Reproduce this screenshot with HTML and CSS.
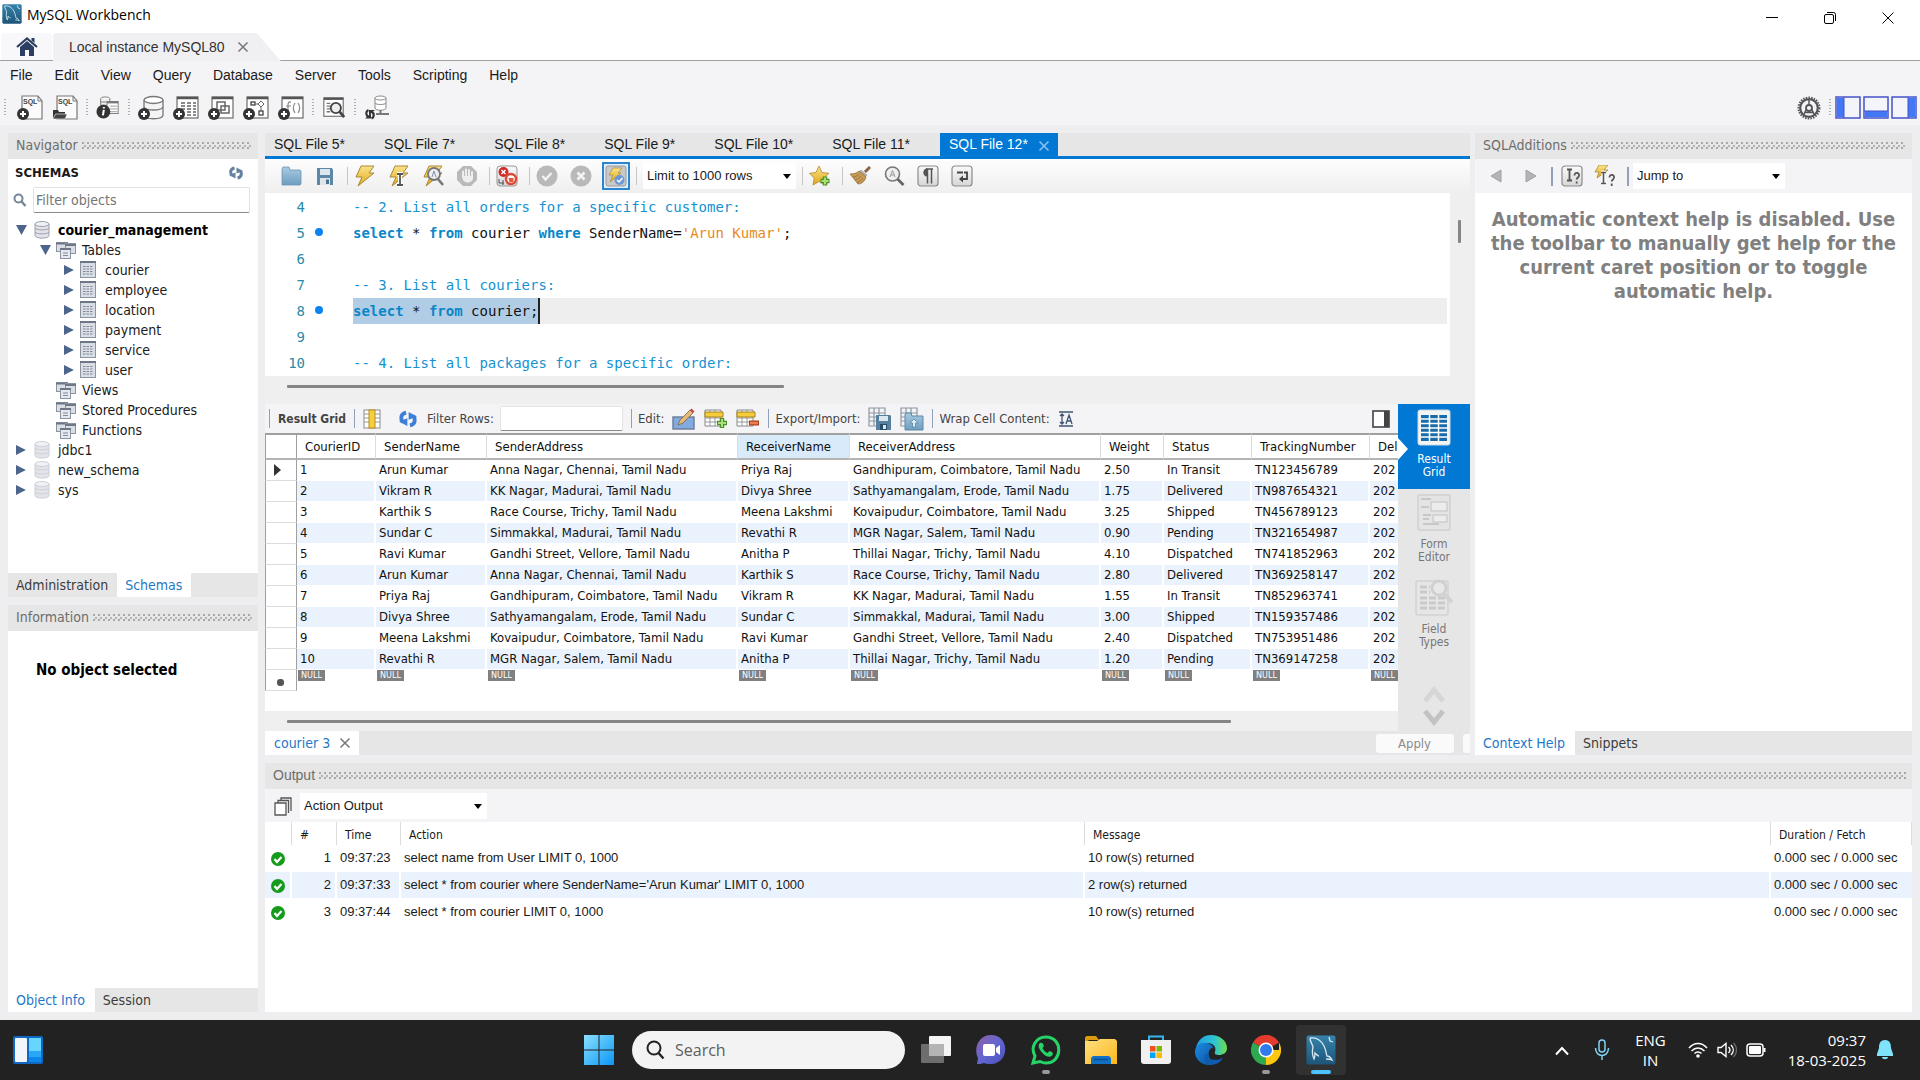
FILE: index.html
```html
<!DOCTYPE html>
<html lang="en">
<head>
<meta charset="utf-8">
<title>MySQL Workbench</title>
<link rel="stylesheet" href="styles.css">
</head>
<body>
<svg class="sprite" aria-hidden="true">
  <defs>
    <linearGradient id="gold" x1="0" y1="0" x2="0" y2="1"><stop offset="0" stop-color="#fbe38a"/><stop offset="1" stop-color="#e0a818"/></linearGradient>
    <linearGradient id="steel" x1="0" y1="0" x2="0" y2="1"><stop offset="0" stop-color="#a9cbe2"/><stop offset="1" stop-color="#6e9dbf"/></linearGradient>
    <linearGradient id="key" x1="0" y1="0" x2="0" y2="1"><stop offset="0" stop-color="#fafafa"/><stop offset="1" stop-color="#d6d6d6"/></linearGradient>
    <linearGradient id="win" x1="0" y1="0" x2="1" y2="1"><stop offset="0" stop-color="#8be0fd"/><stop offset="1" stop-color="#0a97f5"/></linearGradient>
    <linearGradient id="chat" x1="0" y1="0" x2="1" y2="1"><stop offset="0" stop-color="#8f5fa8"/><stop offset="0.5" stop-color="#6367cf"/><stop offset="1" stop-color="#4a4fc0"/></linearGradient>
    <linearGradient id="folder" x1="0" y1="0" x2="1" y2="1"><stop offset="0" stop-color="#ffe083"/><stop offset="1" stop-color="#fbb719"/></linearGradient>
    <linearGradient id="edgeTop" x1="0" y1="0" x2="1" y2="0"><stop offset="0" stop-color="#1f9fe0"/><stop offset="0.6" stop-color="#2ec4d2"/><stop offset="1" stop-color="#6fe04a"/></linearGradient>
    <linearGradient id="edgeLow" x1="0" y1="0" x2="1" y2="1"><stop offset="0" stop-color="#1b8ee6"/><stop offset="1" stop-color="#0c4c96"/></linearGradient>
    <linearGradient id="sea" x1="0" y1="0" x2="0" y2="1"><stop offset="0" stop-color="#3583ab"/><stop offset="1" stop-color="#1d5578"/></linearGradient>
  </defs>
  <symbol id="plus" viewBox="0 0 12 12"><circle cx="6" cy="6" r="6" fill="#333"/><path d="M6 3v6M3 6h6" stroke="#fff" stroke-width="2"/></symbol>
  <symbol id="i-home" viewBox="0 0 22 19"><path d="M4 10v9h5v-6h4v6h5v-9l-7-6z" fill="#2c3e62"/><path d="M1 10l10-8.500L21 10" fill="none" stroke="#2c3e62" stroke-width="2.200"/><path d="M15.500 1h3v5l-3-2.500z" fill="#2c3e62"/></symbol>
  <symbol id="i-x" viewBox="0 0 12 12"><path d="M1.500 1.500l9 9M10.500 1.500l-9 9" stroke="currentColor" stroke-width="1.500" fill="none"/></symbol>
  <symbol id="i-info" viewBox="0 0 26 26"><ellipse cx="10" cy="3" rx="5" ry="2" fill="#fff" stroke="#777"/><path d="M5 3v7h10V3" fill="#eee" stroke="#777"/><path d="M5 6.500h10" stroke="#777"/><rect x="12" y="6" width="12" height="13" fill="#fff" stroke="#777"/><path d="M12 7h12" stroke="#777" stroke-width="2"/><path d="M15 11h8M15 14h8M15 17h8" stroke="#999"/><circle cx="8" cy="17" r="7.500" fill="#333"/><path d="M8.500 12v1.500M8.500 15l-1 6" stroke="#fff" stroke-width="2.200"/></symbol>
  <symbol id="i-dbnew" viewBox="0 0 26 26"><path d="M6 5v15c0 5 19 5 19 0V5" fill="#f4f4f4" stroke="#777" stroke-width="1.300"/><ellipse cx="15.500" cy="5" rx="9.500" ry="3.500" fill="#fff" stroke="#777" stroke-width="1.300"/><path d="M6 12c2 4 17 4 19 0" fill="none" stroke="#777" stroke-width="1.300"/><use href="#plus" x="0" y="13" width="12" height="12"/></symbol>
  <symbol id="i-tblnew" viewBox="0 0 26 26"><rect x="4" y="2" width="21" height="21" fill="#fff" stroke="#777" stroke-width="1.300"/><path d="M4 3h21" stroke="#555" stroke-width="2.500"/><path d="M8 8h4M14 8h4M20 8h3M8 11h4M14 11h4M20 11h3M8 14h4M14 14h4M20 14h3M14 17h4M20 17h3M14 20h4M20 20h3" stroke="#666" stroke-width="1.500"/><use href="#plus" x="0" y="13" width="12" height="12"/></symbol>
  <symbol id="i-viewnew" viewBox="0 0 26 26"><rect x="4" y="2" width="21" height="21" fill="#fff" stroke="#777" stroke-width="1.300"/><path d="M4 3h21" stroke="#555" stroke-width="2.500"/><rect x="9" y="7" width="8" height="8" fill="none" stroke="#666" stroke-width="1.500"/><rect x="13" y="11" width="8" height="7" fill="none" stroke="#666" stroke-width="1.500"/><use href="#plus" x="0" y="13" width="12" height="12"/></symbol>
  <symbol id="i-procnew" viewBox="0 0 26 26"><rect x="4" y="2" width="21" height="21" fill="#fff" stroke="#777" stroke-width="1.300"/><path d="M4 3h21" stroke="#555" stroke-width="2.500"/><rect x="8" y="7" width="4" height="3" fill="none" stroke="#444" stroke-width="1.300"/><path d="M18 6l3 3-3 3-3-3zM12 9h3M18 12v4" fill="none" stroke="#666"/><rect x="16" y="16" width="4" height="4" fill="none" stroke="#444" stroke-width="1.300"/><use href="#plus" x="0" y="13" width="12" height="12"/></symbol>
  <symbol id="i-funcnew" viewBox="0 0 26 26"><rect x="4" y="2" width="21" height="21" fill="#fff" stroke="#777" stroke-width="1.300"/><path d="M4 3h21" stroke="#555" stroke-width="2.500"/><path d="M13 7c-3-.5-3 2-3 4v6M8 11h5M17 8c-2 3-2 7 0 10M20 8c2 3 2 7 0 10" fill="none" stroke="#888" stroke-width="1.200"/><use href="#plus" x="0" y="13" width="12" height="12"/></symbol>
  <symbol id="i-search-tbl" viewBox="0 0 26 26"><rect x="2" y="2" width="21" height="20" fill="#fff" stroke="#777" stroke-width="1.300"/><path d="M2 3h21" stroke="#555" stroke-width="2.500"/><path d="M5 8h4M5 11h4M5 14h4M5 17h4" stroke="#777" stroke-width="1.500"/><circle cx="15" cy="13" r="5.500" fill="#eee" stroke="#444" stroke-width="2"/><path d="M19 17l5 6" stroke="#444" stroke-width="3"/></symbol>
  <symbol id="i-reconnect" viewBox="0 0 26 26"><path d="M11 3v10c0 3 11 3 11 0V3" fill="#fff" stroke="#888"/><ellipse cx="16.500" cy="3" rx="5.500" ry="2" fill="#fff" stroke="#888"/><path d="M11 8c1 2 10 2 11 0" fill="none" stroke="#888"/><path d="M16.500 15v4M12 19h13" stroke="#777" stroke-width="2"/><path d="M4.500 15c-3 1.500-3 5 0 7M7.500 23.500c3-1.500 3-5 0-7" fill="none" stroke="#333" stroke-width="2.200"/><path d="M1 23.500h6v-5zM11 15H5v5z" fill="#333"/></symbol>
  <symbol id="i-gear" viewBox="0 0 24 24"><circle cx="12" cy="12" r="10.500" fill="none" stroke="#555" stroke-width="2" stroke-dasharray="1.500 1.200"/><circle cx="12" cy="12" r="8.800" fill="none" stroke="#555" stroke-width="2.200"/><circle cx="12" cy="12" r="3" fill="none" stroke="#555" stroke-width="1.800"/><path d="M12 4v5M9.500 13L7 18M14.500 13l2.500 5M7 16.500h10" stroke="#555" stroke-width="1.500" fill="none"/></symbol>
  <symbol id="i-pleft" viewBox="0 0 26 24"><rect x="1" y="1" width="24" height="21" fill="#f4f4fb" stroke="#4653c9" stroke-width="1.500"/><path d="M2 2h7v19H2z" fill="#4277f5"/><path d="M9 1v21" stroke="#4653c9"/></symbol>
  <symbol id="i-pbottom" viewBox="0 0 26 24"><rect x="1" y="1" width="24" height="21" fill="#f4f4fb" stroke="#4653c9" stroke-width="1.500"/><path d="M2 15h22v6H2z" fill="#4277f5"/><path d="M1 15h24" stroke="#4653c9"/></symbol>
  <symbol id="i-pright" viewBox="0 0 26 24"><rect x="1" y="1" width="24" height="21" fill="#f4f4fb" stroke="#4653c9" stroke-width="1.500"/><path d="M17 2h7v19h-7z" fill="#4277f5"/><path d="M17 1v21" stroke="#4653c9"/></symbol>
  <symbol id="i-sync" viewBox="0 0 14 14"><path d="M5.500 2C1 3 1 7 3 9.500M8.500 12C13 11 13 7 11 4.500" fill="none" stroke="currentColor" stroke-width="3"/><path d="M0 9l6.500 3.500V6.500zM14 5L7.500 1.500v6z" fill="currentColor"/></symbol>
  <symbol id="i-mag" viewBox="0 0 14 14"><circle cx="5.500" cy="5.500" r="4" fill="none" stroke="#76869a" stroke-width="2"/><path d="M8.500 8.500L12.500 13" stroke="#76869a" stroke-width="2.500"/></symbol>
  <symbol id="i-db" viewBox="0 0 16 18"><path d="M1 3v11.500c0 3.500 14 3.500 14 0V3" fill="#e2e4ea" stroke="currentColor"/><ellipse cx="8" cy="3" rx="7" ry="2.500" fill="#f0f1f4" stroke="currentColor"/><path d="M1 7c1 2.500 13 2.500 14 0M1 11c1 2.500 13 2.500 14 0" fill="none" stroke="currentColor"/></symbol>
  <symbol id="i-tbl" viewBox="0 0 16 18"><rect x=".5" y=".5" width="15" height="16" fill="#d9dde4" stroke="#8b94a1"/><path d="M0 1h16" stroke="#6d7785" stroke-width="2"/><path d="M3 5.500h10M3 8h10M3 10.500h10M3 13h10" stroke="#828c9a" stroke-dasharray="2.500 1"/></symbol>
  <symbol id="i-multi" viewBox="0 0 20 17"><rect x=".5" y=".5" width="11" height="9" fill="#d9dde4" stroke="#8b94a1"/><path d="M0 1.500h12" stroke="#6d7785" stroke-width="2"/><rect x="9.500" y="1.500" width="10" height="10" fill="#d9dde4" stroke="#8b94a1"/><path d="M9 3h11" stroke="#6d7785" stroke-width="2"/><rect x="4.500" y="6.500" width="10" height="10" fill="#e6e8ee" stroke="#8b94a1"/><path d="M4 7h11" stroke="#6d7785" stroke-width="2"/><path d="M7 11h5M7 13.500h5" stroke="#828c9a"/></symbol>
  <symbol id="i-folder" viewBox="0 0 22 22"><path d="M2 4l1-2h6l1 3H20l1 1v13l-1 1H2z" fill="url(#steel)" stroke="#6c97b5" stroke-width=".8"/></symbol>
  <symbol id="i-save" viewBox="0 0 22 22"><path d="M3 3h15l1 2v15H3z" fill="#5c88a8"/><path d="M6 4h10v6H6z" fill="#dde7ee"/><path d="M6 13h10v7H6z" fill="#dfe5ea"/><path d="M12 14.500h3V19h-3z" fill="#4b7391"/></symbol>
  <symbol id="i-bolt" viewBox="0 0 22 22"><path d="M7 1h13l-5 7h5L4 21l4-9H2z" fill="url(#gold)" stroke="#a98a3a" stroke-width="1"/></symbol>
  <symbol id="i-boltcur" viewBox="0 0 22 22"><use href="#i-bolt"/><path d="M9 9h6M12 9v11M9 20h6" stroke="#fff" stroke-width="4"/><path d="M9 9h6M12 9v11M9 20h6" stroke="#555" stroke-width="1.800"/></symbol>
  <symbol id="i-explain" viewBox="0 0 22 22"><use href="#i-bolt"/><circle cx="12" cy="9" r="6" fill="#eef2f8" fill-opacity=".9" stroke="#777" stroke-width="1.800"/><path d="M10 12l2-6 2 6" fill="none" stroke="#7e93bd"/><path d="M16 14l5 6" stroke="#777" stroke-width="2.600"/></symbol>
  <symbol id="i-stop" viewBox="0 0 22 22"><path d="M7 1h8l6 6v8l-6 6H7l-6-6V7z" fill="#b9b9b9"/><path d="M7 12V6.500M10 11V4.500M13 11V5M16 12V7" stroke="#eee" stroke-width="2" stroke-linecap="round"/><path d="M6 11h11v2c0 5-8 6-10 2z" fill="#eee"/></symbol>
  <symbol id="i-err" viewBox="0 0 22 22"><rect x="1" y="1" width="20" height="20" rx="3" fill="url(#key)" stroke="#999"/><circle cx="7.500" cy="7" r="5" fill="#cf2a27"/><path d="M5.500 5l4 4M9.500 5l-4 4" stroke="#fff" stroke-width="1.500"/><circle cx="15" cy="14" r="5" fill="#fff" stroke="#dd4b35" stroke-width="2.500"/><path d="M12.500 13h5v4h-4z" fill="#e2573f"/><path d="M3 14v4h5M7 15v5" stroke="#555" fill="none"/></symbol>
  <symbol id="i-ok" viewBox="0 0 22 22"><circle cx="11" cy="11" r="10.500" fill="#b9b9b9"/><path d="M6.500 11l3 3.500 6-6.500" stroke="#f3f3f3" stroke-width="2.400" fill="none"/></symbol>
  <symbol id="i-no" viewBox="0 0 22 22"><circle cx="11" cy="11" r="10.500" fill="#b9b9b9"/><path d="M7.500 7.500l7 7M14.500 7.500l-7 7" stroke="#f3f3f3" stroke-width="2.600"/></symbol>
  <symbol id="i-auto" viewBox="0 0 22 22"><rect x="1" y="1" width="20" height="20" rx="2" fill="#c9c9c9" stroke="#999"/><path d="M8 3h9l-4 5h3L5 17l3-7H4z" fill="url(#gold)" stroke="#a98a3a" stroke-width=".7"/><circle cx="14.500" cy="15" r="5" fill="#6d98d8"/><path d="M12 15l2 2 3.500-4" stroke="#fff" stroke-width="1.500" fill="none"/></symbol>
  <symbol id="i-star" viewBox="0 0 22 22"><path d="M10 1l3 6.500 7 .8-5 4.700 1.500 7-6.500-3.500L4 20l1.200-7L.5 8.300l6.500-.8z" fill="url(#gold)" stroke="#b08a2c" stroke-width=".8"/><path d="M16 11.500v9M11.500 16h9" stroke="#4e8f2a" stroke-width="4.500"/><path d="M16 12.500v7M12.500 16h7" stroke="#a9e07a" stroke-width="2.200"/></symbol>
  <symbol id="i-broom" viewBox="0 0 22 22"><path d="M21 2l-5 5" stroke="#8a6242" stroke-width="3"/><path d="M12 5l6 5-2 2-6-5z" fill="#b9b3a8" stroke="#888" stroke-width=".5"/><path d="M10 6l7 6c-1 4-4 7-8 7L1 9c4 0 7-1 9-3z" fill="#c79a55" stroke="#8a6a3a" stroke-width=".7"/><path d="M10 9c-2 2-4 3-6 3M12 11c-2 2-3 3-6 4M14 13c-1 2-3 3-6 5" stroke="#94703a" fill="none" stroke-width=".8"/></symbol>
  <symbol id="i-find" viewBox="0 0 22 22"><circle cx="9.500" cy="9" r="7" fill="#efefef" stroke="#777" stroke-width="1.600"/><path d="M7 12l2.500-6.500L12 12M8 10h3" fill="none" stroke="#999"/><path d="M14.500 14l6 6" stroke="#666" stroke-width="2.800"/></symbol>
  <symbol id="i-pilcrow" viewBox="0 0 22 22"><rect x="1" y="1" width="20" height="20" rx="3" fill="url(#key)" stroke="#8b8b8b" stroke-width="1.200"/><path d="M10.500 3.500v8C5 12 5 3.500 10 3.500z" fill="#555"/><path d="M10.500 4v14.500M14.500 4v14.500M9 4h7" stroke="#555" stroke-width="1.500"/></symbol>
  <symbol id="i-wrap" viewBox="0 0 22 22"><rect x="1" y="1" width="20" height="20" rx="3" fill="url(#key)" stroke="#8b8b8b" stroke-width="1.200"/><path d="M6 7.500h6M13 7.500h3v6.500h-5" stroke="#444" stroke-width="1.800" fill="none"/><path d="M12 10.500v7L8 14z" fill="#444"/></symbol>
  <symbol id="i-back" viewBox="0 0 12 14"><path d="M11 1v12L1 7z" fill="#b4b4b6" stroke="#a2a2a4"/></symbol>
  <symbol id="i-fwd" viewBox="0 0 12 14"><path d="M1 1v12l10-6z" fill="#b4b4b6" stroke="#a2a2a4"/></symbol>
  <symbol id="i-help" viewBox="0 0 22 22"><rect x="1" y="1" width="20" height="20" rx="3" fill="url(#key)" stroke="#8b8b8b" stroke-width="1.200"/><path d="M6 4.500h5M8.500 4.500v11M6 15.500h5" stroke="#555" stroke-width="1.800"/><path d="M13.500 10.500c0-4 5-3 4.500 0 0 2-2.300 2-2.300 4M15.700 16.500v2" fill="none" stroke="#555" stroke-width="1.800"/></symbol>
  <symbol id="i-bolthelp" viewBox="0 0 22 22"><path d="M5 0h9l-4 5h4L3 13l2-6H1z" fill="url(#gold)" stroke="#a98a3a" stroke-width=".8"/><path d="M7 7.500h5M9.500 7.500v11M7 18.500h5" stroke="#fff" stroke-width="3.500"/><path d="M7 7.500h5M9.500 7.500v11M7 18.500h5" stroke="#555" stroke-width="1.600"/><path d="M15.500 12.500c0-4 5-3 4.500 0 0 2-2.300 2-2.300 4M17.700 18.500v2.500" fill="none" stroke="#555" stroke-width="1.800"/></symbol>
  <symbol id="i-cols" viewBox="0 0 18 20"><rect x="1" y="1" width="16" height="18" fill="#fff" stroke="#8a8a8a"/><path d="M1 5h16M1 9h16M1 13h16" stroke="#999"/><rect x="6" y="1" width="6" height="18" fill="#f7cf3e" stroke="#b88d1a"/></symbol>
  <symbol id="i-edit" viewBox="0 0 24 22"><rect x="1" y="9" width="21" height="12" fill="#82a9e0" stroke="#6a7a94" stroke-width="1.400"/><path d="M6 17l2-5L18 2l3 3-10 10z" fill="#e6b877" stroke="#7a6342" stroke-width=".8"/><path d="M18 2l1.500-1.500 3 3L21 5z" fill="#c34b3f"/></symbol>
  <symbol id="i-rowadd" viewBox="0 0 24 22"><path d="M1 2h16v16H1z" fill="#fff" stroke="#888"/><path d="M1 10h16M1 14h16M6 2v16M11 2v16" stroke="#999"/><path d="M1 4h18v5H1z" fill="#f5cc3b" stroke="#a88420"/><path d="M18 10v10M13 15h10" stroke="#4e8f2a" stroke-width="4.500"/><path d="M18 11v8M14 15h8" stroke="#a9e07a" stroke-width="2"/></symbol>
  <symbol id="i-rowdel" viewBox="0 0 24 22"><path d="M1 2h16v16H1z" fill="#fff" stroke="#888"/><path d="M1 10h16M1 14h16M6 2v16M11 2v16" stroke="#999"/><path d="M1 4h18v5H1z" fill="#f5cc3b" stroke="#a88420"/><path d="M13 15h10" stroke="#a8401c" stroke-width="5"/><path d="M14 15h8" stroke="#ee7d50" stroke-width="2.600"/></symbol>
  <symbol id="i-export" viewBox="0 0 24 24"><path d="M1 1h16v18H1zM1 6h16M1 10h16M1 14h16M6 1v18M11 1v18" fill="none" stroke="#8c97a1" stroke-width="1.200"/><path d="M8 8h14l1 1v14H8z" fill="#55819f"/><path d="M11 9h9v5h-9z" fill="#dbe6ee"/><path d="M12 17h7v6h-7z" fill="#274d68"/><path d="M15 18h3v4h-3z" fill="#dbe6ee"/></symbol>
  <symbol id="i-import" viewBox="0 0 24 24"><path d="M1 1h16v18H1zM1 6h16M1 10h16M1 14h16M6 1v18M11 1v18" fill="none" stroke="#8c97a1" stroke-width="1.200"/><path d="M5 8l1-2h5l1 3h11v14H5z" fill="url(#steel)" stroke="#5c88a8"/><path d="M14 12l4 4h-2.500v4h-3v-4H10z" fill="#dceaf4" stroke="#5c88a8" stroke-width=".8"/></symbol>
  <symbol id="i-wrapcell" viewBox="0 0 16 16"><path d="M1 1h14M1 15h14" stroke="#3f5472" stroke-width="1.500"/><path d="M4 3v10M2 5l2-2 2 2M2 11l2 2 2-2M8 13l3-9 3 9M9 10h4" fill="none" stroke="#3f5472" stroke-width="1.300"/></symbol>
  <symbol id="i-side" viewBox="0 0 18 18"><rect x="1" y="1" width="16" height="16" fill="#fff" stroke="#444" stroke-width="1.600"/><path d="M12 1h5v16h-5z" fill="#444"/></symbol>
  <symbol id="i-resgrid" viewBox="0 0 34 38"><rect x="1" y="1" width="32" height="35" rx="2" fill="#f5f5f5" stroke="#c9d7e2"/><path d="M4 6h26v26H4z" fill="#1a6ba9"/><path d="M4 10h26M4 14.500h26M4 19h26M4 23.500h26M4 28h26M12.500 6v26M21.500 6v26" stroke="#fff" stroke-width="1.500"/></symbol>
  <symbol id="i-form" viewBox="0 0 34 38"><rect x="1" y="1" width="32" height="35" rx="2" fill="#e4e4e4" stroke="#cfcfcf" stroke-width="1.500"/><path d="M4 5h10M4 13h8M6 21h8M6 25h6M6 30h16" stroke="#bdbdbd" stroke-width="1.500"/><rect x="14" y="8" width="16" height="9" fill="#ececec" stroke="#c2c2c2"/><rect x="16" y="21" width="14" height="7" fill="#ececec" stroke="#c2c2c2"/></symbol>
  <symbol id="i-types" viewBox="0 0 38 38"><rect x="1" y="2" width="32" height="34" rx="2" fill="#e6e6e6" stroke="#d2d2d2" stroke-width="1.500"/><path d="M5 8h10M5 13h10M5 19h26M5 24h26M5 29h26" stroke="#cacaca" stroke-width="3" stroke-dasharray="7 2"/><circle cx="24" cy="9" r="7" fill="#e8e8e8" stroke="#d0d0d0" stroke-width="3"/><path d="M29 15l8 8" stroke="#d2d2d2" stroke-width="4"/></symbol>
  <symbol id="i-up" viewBox="0 0 24 18"><path d="M3 15l9-11 9 11" fill="none" stroke="currentColor" stroke-width="5"/></symbol>
  <symbol id="i-down" viewBox="0 0 24 18"><path d="M3 3l9 11 9-11" fill="none" stroke="currentColor" stroke-width="5"/></symbol>
  <symbol id="i-stack" viewBox="0 0 18 19"><path d="M1 6h11v12H1z" fill="#fff" stroke="#555" stroke-width="1.300"/><path d="M4 6V3.500h10.500V16M7 3.500V1h10v13" fill="none" stroke="#555" stroke-width="1.300"/></symbol>
  <symbol id="i-done" viewBox="0 0 14 14"><circle cx="7" cy="7" r="7" fill="#159b1c"/><path d="M3.500 7l2.500 3 4.500-5" fill="none" stroke="#fff" stroke-width="2.200"/></symbol>
  <symbol id="i-dolphin" viewBox="0 0 30 30"><rect x=".5" y=".5" width="29" height="29" rx="2" fill="url(#sea)"/><path d="M4 3c6-1 11 2 14 8 2 4 2 7 3 10 2 0 4 2 5 4-2-1-4-1-6-1M4 3c0 4 2 5 3 9-1 4-1 8 1 12 1-2 1-4 1-6 2 2 3 3 4 3M23 2l1 4 3 1" fill="none" stroke="#d8e8f2" stroke-width="1.300"/></symbol>
  <symbol id="i-widgets" viewBox="0 0 30 28"><rect width="30" height="28" rx="2" fill="#1068c2"/><rect x="2" y="2" width="12" height="24" rx="1" fill="#f2f6fb"/><rect x="16" y="2" width="12" height="13" fill="#66d6ff"/><rect x="16" y="15" width="12" height="6" fill="#2aa8f8"/><rect x="16" y="21" width="12" height="5" fill="#0e86ea"/></symbol>
  <symbol id="i-start" viewBox="0 0 30 30"><path d="M0 0h14.500v14.500H0zM15.500 0H30v14.500H15.500zM0 15.500h14.500V30H0zM15.500 15.500H30V30H15.500z" fill="url(#win)"/></symbol>
  <symbol id="i-lens" viewBox="0 0 20 20"><circle cx="9" cy="8" r="6.500" fill="none" stroke="#222" stroke-width="2"/><path d="M13.500 13l5 5.500" stroke="#222" stroke-width="2.400"/></symbol>
  <symbol id="i-taskview" viewBox="0 0 32 30"><rect x="9" y="1" width="22" height="20" rx="1" fill="#f4f4f4"/><rect x="1" y="9" width="23" height="19" rx="1" fill="#6e6e6e"/><rect x="9" y="9" width="15" height="12" fill="#b4b4b4"/></symbol>
  <symbol id="i-chat" viewBox="0 0 30 30"><path d="M15 0c19 0 19 28 0 29-3 0-5 0-7-1-2 1-5 1-7 1l1-6C-3 13 3 0 15 0z" fill="url(#chat)"/><rect x="7" y="9" width="12" height="12" rx="2" fill="#fff"/><path d="M20 13l4-3v10l-4-3z" fill="#fff"/></symbol>
  <symbol id="i-whatsapp" viewBox="0 0 30 30"><path d="M2 28l2-7C-1 12 5 2 15 2c17 0 17 26 0 26-2 0-4-.5-6-1.500z" fill="none" stroke="#25d366" stroke-width="3"/><path d="M9 8c2-1 3 0 4 3l-1.500 2c1 2.500 3 4 5 5l2-2c3 1 4 2 3 4-2 3-7 2-10-2-4-4-5-8-2.500-10z" fill="#25d366"/></symbol>
  <symbol id="i-explorer" viewBox="0 0 32 28"><path d="M0 2c0-1 1-2 2-2h9l3 4H4L0 8z" fill="#dd9a0c"/><path d="M0 8V5h12l3-2h15l2 2v23H0z" fill="url(#folder)"/><path d="M6 28v-6l2-2h16l2 2v6z" fill="#0f72c6"/><path d="M9 23.500h14" stroke="#0a4c8a" stroke-width="1.500"/></symbol>
  <symbol id="i-store" viewBox="0 0 30 30"><path d="M8 6V1.500h14V6" fill="none" stroke="#35b5ec" stroke-width="2"/><path d="M0 5h30v21c0 2-1 3-3 3H3c-2 0-3-1-3-3z" fill="#f0f0f0"/><path d="M9 11h5.500v5.500H9z" fill="#f25022"/><path d="M15.500 11H21v5.500h-5.500z" fill="#7fba00"/><path d="M9 17.500h5.500V23H9z" fill="#00a4ef"/><path d="M15.500 17.500H21V23h-5.500z" fill="#ffb900"/></symbol>
  <symbol id="i-edge" viewBox="0 0 32 30"><path d="M1 13C3 4 9 0 16 0c9 0 16 6 16 13 0 5-4 7-8 7-3 0-5-1-4-3 2-6-3-9-8-9C6 8 2 11 1 13z" fill="url(#edgeTop)"/><path d="M0 17c0-7 6-10 12-9 4 1 6 3 6 5-6 0-6 12 2 14-2 2-4 3-6 3C5 30 0 23 0 17z" fill="url(#edgeLow)"/><path d="M12 18c0 6 6 9 16 5-3 5-8 7-13 7-7-3-6-10-3-12z" fill="#0e5bb0"/></symbol>
  <symbol id="i-chrome" viewBox="0 0 30 30"><path d="M15 15L2 7.500A15 15 0 0128 7.500z" fill="#e33b2e"/><path d="M15 15L2 7.500A15 15 0 0015 30z" fill="#2da94f"/><path d="M15 15h13V7.500A15 15 0 0115 30z" fill="#fdc70f"/><circle cx="15" cy="15" r="7.500" fill="#fff"/><circle cx="15" cy="15" r="6" fill="#2f7bee"/></symbol>
  <symbol id="i-chev" viewBox="0 0 14 10"><path d="M1 8.500L7 2l6 6.500" fill="none" stroke="#fff" stroke-width="2"/></symbol>
  <symbol id="i-mic" viewBox="0 0 16 22"><rect x="5" y="1" width="6" height="12" rx="3" fill="none" stroke="#7fd3f2" stroke-width="1.500"/><path d="M1.500 9c0 10 13 10 13 0M8 17v4" fill="none" stroke="#7fd3f2" stroke-width="1.500"/></symbol>
  <symbol id="i-wifi" viewBox="0 0 20 16"><path d="M1 6c5-6 13-6 18 0M3.500 9c4-4 9-4 13 0M6.500 11.500c2-2 5-2 7 0" fill="none" stroke="#fff" stroke-width="1.500"/><circle cx="10" cy="14" r="1.800" fill="#fff"/></symbol>
  <symbol id="i-vol" viewBox="0 0 20 16"><path d="M1 5.500h3l5-4v13l-5-4H1z" fill="none" stroke="#fff" stroke-width="1.400"/><path d="M11.500 5c2 2 2 4 0 6M14 3c3 3 3 7 0 10" fill="none" stroke="#fff" stroke-width="1.400"/><path d="M16.500 1c4 4 4 10 0 14" fill="none" stroke="#666" stroke-width="1.400"/></symbol>
  <symbol id="i-batt" viewBox="0 0 20 14"><rect x="1" y="1" width="16" height="12" rx="3" fill="none" stroke="#fff" stroke-width="1.500"/><rect x="3" y="3" width="12" height="8" rx="1" fill="#fff"/><path d="M18.500 5v4" stroke="#fff" stroke-width="2"/></symbol>
  <symbol id="i-bell" viewBox="0 0 16 20"><path d="M8 0c5 0 6 4 6 8l2 6v2H0v-2l2-6c0-4 1-8 6-8zM5 17h6c0 3-6 3-6 0z" fill="#7fe3fb"/></symbol>
</svg>

<header class="titlebar">
  <div class="title"><svg width="20" height="20"><use href="#i-dolphin"/></svg><h1>MySQL Workbench</h1></div>
  <div class="wincontrols">
    <button aria-label="Minimize"><svg width="12" height="12"><path d="M0 5.500h12" stroke="#000"/></svg></button>
    <button aria-label="Restore"><svg width="12" height="12" fill="none" stroke="#000"><rect x=".5" y="2.500" width="9" height="9" rx="1.500"/><path d="M3 .5h6.500a2 2 0 012 2V9"/></svg></button>
    <button aria-label="Close"><svg width="12" height="12"><path d="M.5.5l11 11M11.500.5l-11 11" stroke="#000"/></svg></button>
  </div>
</header>
<nav class="conntabs">
  <button class="hometab" aria-label="Home"><svg width="22" height="19"><use href="#i-home"/></svg></button>
  <div class="conntab"><button>Local instance MySQL80</button><button class="close" aria-label="Close connection"><svg width="12" height="12"><use href="#i-x"/></svg></button></div>
</nav>
<nav class="menubar">
  <button>File</button><button>Edit</button><button>View</button><button>Query</button><button>Database</button><button>Server</button><button>Tools</button><button>Scripting</button><button>Help</button>
</nav>
<div class="toolbar">
  <span class="grip"></span>
  <div class="tgroup first">
    <button aria-label="New SQL tab"><svg width="26" height="26"><path d="M5 1h16l4 5v18H5z" fill="#fbfbfb" stroke="#777" stroke-width="1.200"/><path d="M21 1v5h4" fill="none" stroke="#777"/><text x="6" y="9" class="tiny">SQL</text><use href="#plus" x="0" y="13" width="12" height="12"/></svg></button>
    <button aria-label="Open SQL script"><svg width="26" height="26"><path d="M5 1h16l4 5v18H5z" fill="#fbfbfb" stroke="#777" stroke-width="1.200"/><path d="M21 1v5h4" fill="none" stroke="#777"/><text x="6" y="9" class="tiny">SQL</text><path d="M1 24v-9h5l1 2h6v2h2l-2 5z" fill="#333"/><path d="M3.500 19H15l-2 5H1z" fill="#444" stroke="#fff" stroke-width=".6"/></svg></button>
  </div>
  <span class="grip"></span>
  <div class="tgroup"><button aria-label="Inspector"><svg width="24" height="26"><use href="#i-info"/></svg></button></div>
  <span class="grip"></span>
  <div class="tgroup">
    <button aria-label="New schema"><svg width="26" height="26"><use href="#i-dbnew"/></svg></button>
    <button aria-label="New table"><svg width="26" height="26"><use href="#i-tblnew"/></svg></button>
    <button aria-label="New view"><svg width="26" height="26"><use href="#i-viewnew"/></svg></button>
    <button aria-label="New procedure"><svg width="26" height="26"><use href="#i-procnew"/></svg></button>
    <button aria-label="New function"><svg width="26" height="26"><use href="#i-funcnew"/></svg></button>
  </div>
  <span class="grip"></span>
  <div class="tgroup"><button aria-label="Search data"><svg width="24" height="26"><use href="#i-search-tbl"/></svg></button></div>
  <span class="grip"></span>
  <div class="tgroup"><button aria-label="Reconnect"><svg width="26" height="26"><use href="#i-reconnect"/></svg></button></div>
  <div class="tright">
    <button class="prefs" aria-label="Preferences"><svg width="24" height="24"><use href="#i-gear"/></svg></button>
    <span class="grip"></span>
    <div class="toggles">
      <button aria-label="Toggle sidebar"><svg width="26" height="24"><use href="#i-pleft"/></svg></button>
      <button aria-label="Toggle output"><svg width="26" height="24"><use href="#i-pbottom"/></svg></button>
      <button aria-label="Toggle additions"><svg width="26" height="24"><use href="#i-pright"/></svg></button>
    </div>
  </div>
</div>

<main class="workspace">
  <aside class="sidebar">
    <section class="panel schemas">
      <h2 class="phead">Navigator<span class="dots"></span></h2>
      <div class="pbody">
        <div class="shead"><h3>SCHEMAS</h3><button aria-label="Refresh schemas"><svg width="14" height="14"><use href="#i-sync"/></svg></button></div>
        <div class="filter"><label for="filter" aria-label="Filter objects"><svg width="14" height="14"><use href="#i-mag"/></svg></label><input id="filter" type="text" placeholder="Filter objects"></div>
        <ul class="tree">
          <li class="l1 bold"><i class="open"></i><svg class="dk" width="16" height="18"><use href="#i-db"/></svg>courier_management</li>
          <li class="l2"><i class="open"></i><svg width="20" height="17"><use href="#i-multi"/></svg>Tables</li>
          <li class="l3"><i class="shut"></i><svg width="16" height="18"><use href="#i-tbl"/></svg>courier</li>
          <li class="l3"><i class="shut"></i><svg width="16" height="18"><use href="#i-tbl"/></svg>employee</li>
          <li class="l3"><i class="shut"></i><svg width="16" height="18"><use href="#i-tbl"/></svg>location</li>
          <li class="l3"><i class="shut"></i><svg width="16" height="18"><use href="#i-tbl"/></svg>payment</li>
          <li class="l3"><i class="shut"></i><svg width="16" height="18"><use href="#i-tbl"/></svg>service</li>
          <li class="l3"><i class="shut"></i><svg width="16" height="18"><use href="#i-tbl"/></svg>user</li>
          <li class="l2"><i></i><svg width="20" height="17"><use href="#i-multi"/></svg>Views</li>
          <li class="l2"><i></i><svg width="20" height="17"><use href="#i-multi"/></svg>Stored Procedures</li>
          <li class="l2"><i></i><svg width="20" height="17"><use href="#i-multi"/></svg>Functions</li>
          <li class="l1"><i class="shut"></i><svg class="lt" width="16" height="18"><use href="#i-db"/></svg>jdbc1</li>
          <li class="l1"><i class="shut"></i><svg class="lt" width="16" height="18"><use href="#i-db"/></svg>new_schema</li>
          <li class="l1"><i class="shut"></i><svg class="lt" width="16" height="18"><use href="#i-db"/></svg>sys</li>
        </ul>
      </div>
      <div class="btabs"><button>Administration</button><button class="on">Schemas</button></div>
    </section>
    <section class="panel info">
      <h2 class="phead">Information<span class="dots"></span></h2>
      <div class="pbody"><p class="noobj">No object selected</p></div>
      <div class="btabs"><button class="on">Object Info</button><button>Session</button></div>
    </section>
  </aside>

  <div class="content">
    <div class="upper">
      <section class="query">
        <div class="sqltabs">
          <button>SQL File 5*</button><button>SQL File 7*</button><button>SQL File 8*</button><button>SQL File 9*</button><button>SQL File 10*</button><button>SQL File 11*</button>
          <div class="on"><button>SQL File 12*</button><button class="close" aria-label="Close tab"><svg width="12" height="12"><use href="#i-x"/></svg></button></div>
        </div>
        <div class="edbar">
          <div class="egroup">
            <button aria-label="Open script"><svg width="22" height="22"><use href="#i-folder"/></svg></button>
            <button aria-label="Save script"><svg width="22" height="22"><use href="#i-save"/></svg></button>
          </div><span class="esep"></span>
          <div class="egroup">
            <button aria-label="Execute"><svg width="22" height="22"><use href="#i-bolt"/></svg></button>
            <button aria-label="Execute current"><svg width="22" height="22"><use href="#i-boltcur"/></svg></button>
            <button aria-label="Explain"><svg width="22" height="22"><use href="#i-explain"/></svg></button>
            <button aria-label="Stop"><svg width="22" height="22"><use href="#i-stop"/></svg></button>
          </div><span class="esep"></span>
          <div class="egroup"><button aria-label="Stop on error"><svg width="22" height="22"><use href="#i-err"/></svg></button></div><span class="esep"></span>
          <div class="egroup">
            <button aria-label="Commit"><svg width="22" height="22"><use href="#i-ok"/></svg></button>
            <button aria-label="Rollback"><svg width="22" height="22"><use href="#i-no"/></svg></button>
          </div>
          <button class="boxed" aria-label="Autocommit"><svg width="22" height="22"><use href="#i-auto"/></svg></button>
          <span class="esep tight"></span>
          <div class="combo limit"><select aria-label="Row limit"><option>Limit to 1000 rows</option></select></div>
          <span class="esep tight"></span>
          <div class="egroup"><button aria-label="Save snippet"><svg width="22" height="22"><use href="#i-star"/></svg></button></div><span class="esep"></span>
          <div class="egroup">
            <button aria-label="Beautify"><svg width="22" height="22"><use href="#i-broom"/></svg></button>
            <button aria-label="Find"><svg width="22" height="22"><use href="#i-find"/></svg></button>
            <button aria-label="Show invisible characters"><svg width="22" height="22"><use href="#i-pilcrow"/></svg></button>
            <button aria-label="Wrap lines"><svg width="22" height="22"><use href="#i-wrap"/></svg></button>
          </div>
        </div>
        <div class="editor">
          <div class="lines">
            <div class="line"><span class="num">4</span><span class="mark"></span><code><span class="cm">-- 2. List all orders for a specific customer:</span></code></div>
            <div class="line"><span class="num">5</span><span class="mark dot"></span><code><b>select</b> * <b>from</b> courier <b>where</b> SenderName=<span class="st">'Arun Kumar'</span>;</code></div>
            <div class="line"><span class="num">6</span><span class="mark"></span><code></code></div>
            <div class="line"><span class="num">7</span><span class="mark"></span><code><span class="cm">-- 3. List all couriers:</span></code></div>
            <div class="line"><span class="num">8</span><span class="mark dot"></span><code class="current"><span class="sel"><b>select</b> * <b>from</b> courier;</span></code></div>
            <div class="line"><span class="num">9</span><span class="mark"></span><code></code></div>
            <div class="line"><span class="num">10</span><span class="mark"></span><code><span class="cm">-- 4. List all packages for a specific order:</span></code></div>
          </div>
          <div class="vscroll"><span></span></div>
        </div>
        <div class="hscroll ed"><span></span></div>
        <div class="result">
          <div class="resmain">
            <div class="resbar">
              <span class="rsep"></span><strong>Result Grid</strong><span class="rsep"></span>
              <button aria-label="Columns"><svg width="18" height="20"><use href="#i-cols"/></svg></button>
              <button class="blue" aria-label="Refresh"><svg width="20" height="18"><use href="#i-sync"/></svg></button>
              <label for="rows">Filter Rows:</label><input id="rows" type="text">
              <span class="rsep"></span><span>Edit:</span>
              <button aria-label="Edit row"><svg width="24" height="22"><use href="#i-edit"/></svg></button>
              <button aria-label="Insert row"><svg width="24" height="22"><use href="#i-rowadd"/></svg></button>
              <button aria-label="Delete row"><svg width="24" height="22"><use href="#i-rowdel"/></svg></button>
              <span class="rsep"></span><span>Export/Import:</span>
              <button aria-label="Export"><svg width="24" height="24"><use href="#i-export"/></svg></button>
              <button aria-label="Import"><svg width="24" height="24"><use href="#i-import"/></svg></button>
              <span class="rsep"></span><span>Wrap Cell Content:</span>
              <button aria-label="Wrap cells"><svg width="16" height="16"><use href="#i-wrapcell"/></svg></button>
              <button class="side" aria-label="Toggle side bar"><svg width="18" height="18"><use href="#i-side"/></svg></button>
            </div>
            <div class="gridwrap">
              <table class="grid">
                <colgroup><col class="c0"><col class="c1"><col class="c2"><col class="c3"><col class="c4"><col class="c3"><col class="c6"><col class="c7"><col class="c8"><col></colgroup>
                <thead><tr><th></th><th>CourierID</th><th>SenderName</th><th>SenderAddress</th><th class="hot">ReceiverName</th><th>ReceiverAddress</th><th>Weight</th><th>Status</th><th>TrackingNumber</th><th>Del</th></tr></thead>
                <tbody>
                <tr><td class="cur"></td><td>1</td><td>Arun Kumar</td><td>Anna Nagar, Chennai, Tamil Nadu</td><td>Priya Raj</td><td>Gandhipuram, Coimbatore, Tamil Nadu</td><td>2.50</td><td>In Transit</td><td>TN123456789</td><td>202</td></tr>
                <tr><td></td><td>2</td><td>Vikram R</td><td>KK Nagar, Madurai, Tamil Nadu</td><td>Divya Shree</td><td>Sathyamangalam, Erode, Tamil Nadu</td><td>1.75</td><td>Delivered</td><td>TN987654321</td><td>202</td></tr>
                <tr><td></td><td>3</td><td>Karthik S</td><td>Race Course, Trichy, Tamil Nadu</td><td>Meena Lakshmi</td><td>Kovaipudur, Coimbatore, Tamil Nadu</td><td>3.25</td><td>Shipped</td><td>TN456789123</td><td>202</td></tr>
                <tr><td></td><td>4</td><td>Sundar C</td><td>Simmakkal, Madurai, Tamil Nadu</td><td>Revathi R</td><td>MGR Nagar, Salem, Tamil Nadu</td><td>0.90</td><td>Pending</td><td>TN321654987</td><td>202</td></tr>
                <tr><td></td><td>5</td><td>Ravi Kumar</td><td>Gandhi Street, Vellore, Tamil Nadu</td><td>Anitha P</td><td>Thillai Nagar, Trichy, Tamil Nadu</td><td>4.10</td><td>Dispatched</td><td>TN741852963</td><td>202</td></tr>
                <tr><td></td><td>6</td><td>Arun Kumar</td><td>Anna Nagar, Chennai, Tamil Nadu</td><td>Karthik S</td><td>Race Course, Trichy, Tamil Nadu</td><td>2.80</td><td>Delivered</td><td>TN369258147</td><td>202</td></tr>
                <tr><td></td><td>7</td><td>Priya Raj</td><td>Gandhipuram, Coimbatore, Tamil Nadu</td><td>Vikram R</td><td>KK Nagar, Madurai, Tamil Nadu</td><td>1.55</td><td>In Transit</td><td>TN852963741</td><td>202</td></tr>
                <tr><td></td><td>8</td><td>Divya Shree</td><td>Sathyamangalam, Erode, Tamil Nadu</td><td>Sundar C</td><td>Simmakkal, Madurai, Tamil Nadu</td><td>3.00</td><td>Shipped</td><td>TN159357486</td><td>202</td></tr>
                <tr><td></td><td>9</td><td>Meena Lakshmi</td><td>Kovaipudur, Coimbatore, Tamil Nadu</td><td>Ravi Kumar</td><td>Gandhi Street, Vellore, Tamil Nadu</td><td>2.40</td><td>Dispatched</td><td>TN753951486</td><td>202</td></tr>
                <tr><td></td><td>10</td><td>Revathi R</td><td>MGR Nagar, Salem, Tamil Nadu</td><td>Anitha P</td><td>Thillai Nagar, Trichy, Tamil Nadu</td><td>1.20</td><td>Pending</td><td>TN369147258</td><td>202</td></tr>
                <tr class="nulls"><td class="new"></td><td><span>NULL</span></td><td><span>NULL</span></td><td><span>NULL</span></td><td><span>NULL</span></td><td><span>NULL</span></td><td><span>NULL</span></td><td><span>NULL</span></td><td><span>NULL</span></td><td><span>NULL</span></td></tr>
                </tbody>
              </table>
            </div>
            <div class="hscroll res"><span></span></div>
          </div>
          <div class="resside">
            <button class="on"><svg width="34" height="38"><use href="#i-resgrid"/></svg><span>Result<br>Grid</span></button>
            <button><svg width="34" height="38"><use href="#i-form"/></svg><span>Form<br>Editor</span></button>
            <button><svg width="38" height="38"><use href="#i-types"/></svg><span>Field<br>Types</span></button>
            <div class="updown"><svg class="u" width="24" height="18"><use href="#i-up"/></svg><svg class="d" width="24" height="18"><use href="#i-down"/></svg></div>
          </div>
        </div>
        <div class="btabs restabs"><div class="on"><button>courier 3</button><button class="close" aria-label="Close result"><svg width="12" height="12"><use href="#i-x"/></svg></button></div><button class="apply" disabled>Apply</button><button class="cut" disabled aria-label="Revert"></button></div>
      </section>

      <section class="panel additions">
        <h2 class="phead">SQLAdditions<span class="dots"></span></h2>
        <div class="addbar">
          <button aria-label="Back"><svg width="12" height="14"><use href="#i-back"/></svg></button>
          <button class="fwd" aria-label="Forward"><svg width="12" height="14"><use href="#i-fwd"/></svg></button>
          <span class="rsep"></span>
          <button aria-label="Automatic help"><svg width="22" height="22"><use href="#i-help"/></svg></button>
          <button aria-label="Manual help"><svg width="22" height="22"><use href="#i-bolthelp"/></svg></button>
          <span class="rsep"></span>
          <div class="combo jump"><select aria-label="Jump to"><option>Jump to</option></select></div>
        </div>
        <div class="pbody"><p class="help">Automatic context help is disabled. Use the toolbar to manually get help for the current caret position or to toggle automatic help.</p></div>
        <div class="btabs"><button class="on">Context Help</button><button>Snippets</button></div>
      </section>
    </div>

    <section class="panel output">
      <h2 class="phead">Output<span class="dots"></span></h2>
      <div class="outbar"><svg width="18" height="19"><use href="#i-stack"/></svg><div class="combo action"><select aria-label="Output type"><option>Action Output</option></select></div></div>
      <div class="pbody">
        <table class="log">
          <colgroup><col class="o0"><col class="o1"><col class="o2"><col class="o3"><col><col class="o5"></colgroup>
          <thead><tr><th></th><th>#</th><th>Time</th><th>Action</th><th>Message</th><th>Duration / Fetch</th></tr></thead>
          <tbody>
            <tr><td><svg width="14" height="14"><use href="#i-done"/></svg></td><td>1</td><td>09:37:23</td><td>select name from User LIMIT 0, 1000</td><td>10 row(s) returned</td><td>0.000 sec / 0.000 sec</td></tr>
            <tr><td><svg width="14" height="14"><use href="#i-done"/></svg></td><td>2</td><td>09:37:33</td><td>select * from courier where SenderName='Arun Kumar' LIMIT 0, 1000</td><td>2 row(s) returned</td><td>0.000 sec / 0.000 sec</td></tr>
            <tr><td><svg width="14" height="14"><use href="#i-done"/></svg></td><td>3</td><td>09:37:44</td><td>select * from courier LIMIT 0, 1000</td><td>10 row(s) returned</td><td>0.000 sec / 0.000 sec</td></tr>
          </tbody>
        </table>
      </div>
    </section>
  </div>
</main>

<footer class="taskbar">
  <div class="tleft"><button aria-label="Widgets"><svg width="30" height="28"><use href="#i-widgets"/></svg></button></div>
  <div class="apps">
    <button aria-label="Start"><svg width="30" height="30"><use href="#i-start"/></svg></button>
    <label class="search"><svg width="20" height="20"><use href="#i-lens"/></svg><input type="text" placeholder="Search"></label>
    <button class="app" aria-label="Task view"><svg width="32" height="30"><use href="#i-taskview"/></svg></button>
    <button class="app" aria-label="Chat"><svg width="30" height="30"><use href="#i-chat"/></svg></button>
    <button class="app running" aria-label="WhatsApp"><svg width="30" height="32"><use href="#i-whatsapp"/></svg></button>
    <button class="app" aria-label="File Explorer"><svg width="32" height="28"><use href="#i-explorer"/></svg></button>
    <button class="app" aria-label="Store"><svg width="30" height="30"><use href="#i-store"/></svg></button>
    <button class="app" aria-label="Edge"><svg width="32" height="30"><use href="#i-edge"/></svg></button>
    <button class="app running" aria-label="Chrome"><svg width="30" height="30"><use href="#i-chrome"/></svg></button>
    <button class="app active" aria-label="MySQL Workbench"><svg width="30" height="30"><use href="#i-dolphin"/></svg></button>
  </div>
  <div class="tray">
    <svg class="chev" width="14" height="10"><use href="#i-chev"/></svg>
    <svg class="mic" width="16" height="22"><use href="#i-mic"/></svg>
    <div class="lang">ENG<br>IN</div>
    <div class="status"><svg width="20" height="16"><use href="#i-wifi"/></svg><svg width="20" height="16"><use href="#i-vol"/></svg><svg width="20" height="14"><use href="#i-batt"/></svg></div>
    <div class="clock">09:37<br>18-03-2025</div>
    <svg width="16" height="20"><use href="#i-bell"/></svg>
  </div>
</footer>
</body>
</html>
```
FILE: styles.css
```css
:root {
  --tahoma: "DejaVu Sans Condensed", "DejaVu Sans", sans-serif;
  --arial: "Liberation Sans", Arial, sans-serif;
  --segoe: "Open Sans", "Noto Sans", sans-serif;
  --blue: #0078d4;
  --bar: #e6e6e6;
  --line: #a0a0a0;
}
* { box-sizing: border-box; }
body {
  margin: 0;
  min-height: 100vh;
  display: flex;
  flex-direction: column;
  background: #eeeef1;
  color: #1a1a1a;
  font: 14px/20px var(--tahoma);
}
h1, h2, h3, p, ul { margin: 0; padding: 0; font-weight: normal; }
button, input, select { font: inherit; color: inherit; border: 0; background: none; padding: 0; margin: 0; }
button { display: flex; align-items: center; justify-content: center; white-space: nowrap; }
svg { display: block; flex: none; }
.sprite { position: absolute; width: 0; height: 0; }
.tiny { font: bold 7px/8px var(--arial); fill: #444; }

.titlebar { display: flex; justify-content: space-between; height: 33px; background: #fff; }
.title { display: flex; align-items: flex-start; gap: 5px; padding: 4px 0 0 2px; }
.title h1 { font: 14px/22px var(--segoe); color: #000; }
.wincontrols { display: flex; padding: 4px 3px 0 0; }
.wincontrols button { width: 58px; height: 28px; }

.conntabs { display: flex; height: 28px; background: #fff; border-bottom: 1px solid var(--line); gap: 1px; padding-left: 1px; }
.hometab { width: 51px; background: #f8f8fa; border-radius: 4px 4px 0 0; }
.conntab { display: flex; align-items: center; gap: 12px; height: 28px; padding: 0 32px 0 16px; background: #f0f0f3; border-radius: 4px 0 0 0; clip-path: polygon(0 0, calc(100% - 24px) 0, 100% 100%, 0 100%); font: 14px/20px var(--arial); color: #333; }
.close { color: #777; }

.menubar { display: flex; gap: 22px; height: 29px; padding: 0 0 1px 10px; background: #f4f4f7; font: 14px/20px var(--arial); }
.toolbar { display: flex; align-items: center; gap: 8px; height: 35px; padding: 0 3px 0 4px; background: #f4f4f7; }
.grip { width: 2px; height: 18px; background: repeating-linear-gradient(#a9aebb 0 1px, transparent 1px 3px); }
.tgroup { display: flex; gap: 9px; }
.tgroup.first { margin-left: 3px; }
.tright { display: flex; align-items: center; gap: 4px; margin-left: auto; }
.prefs { margin-right: 4px; }
.toggles { display: flex; gap: 2px; }

.workspace { flex: 1; display: flex; gap: 7px; padding: 8px; }
.sidebar { flex: 0 0 250px; display: flex; flex-direction: column; gap: 8px; }
.content { flex: 1; min-width: 0; display: flex; flex-direction: column; gap: 8px; }
.upper { flex: 1; display: flex; gap: 5px; }
.panel { display: flex; flex-direction: column; }
.schemas { flex: 464 1 0; }
.info { flex: 407 1 0; }
.phead { display: flex; align-items: center; gap: 4px; height: 26px; padding: 0 6px 2px 8px; background: var(--bar); color: #6d6d6d; font-size: 14px; }
.output .phead { font-family: var(--arial); }
.dots {
  flex: 1;
  height: 7px;
  background: radial-gradient(circle at 1px 1px, #a8a8a8 1px, transparent 1px) 0 0 / 5px 5px, radial-gradient(circle at 1px 1px, #b4b4b4 1px, transparent 1px) 2px 3px / 5px 5px;
}
.pbody { flex: 1; background: #fff; }

.shead { display: flex; align-items: center; justify-content: space-between; height: 28px; padding: 0 15px 0 7px; color: #6580a0; }
.shead h3 { font-size: 13px; font-weight: bold; color: #1a1a1a; }
.filter { display: flex; align-items: center; gap: 6px; padding: 0 8px 0 5px; }
.filter input { flex: 1; min-width: 0; height: 26px; padding: 0 2px; background: #fff; border: 1px solid #e2e2e2; border-bottom-color: #8a8a8a; border-radius: 2px; }
.filter input::placeholder { color: #757575; opacity: 1; }
.tree { list-style: none; padding-top: 7px; }
.tree li { display: flex; align-items: center; height: 20px; }
.tree i { width: 11px; height: 10px; }
.tree .open { background: #4d658c; clip-path: polygon(0 0, 100% 0, 50% 100%); }
.tree .shut { background: #4d658c; clip-path: polygon(0 0, 90% 50%, 0 100%); }
.l1 { padding-left: 8px; }
.l1 svg { margin: 0 8px 0 7px; }
.l2 { padding-left: 32px; }
.l2 svg { margin: 0 6px 0 5px; }
.l3 { padding-left: 56px; }
.l3 svg { margin: 0 9px 0 5px; }
.bold { font-weight: bold; color: #000; }
.dk { color: #9aa0ac; }
.lt { color: #cdd0d6; }
.noobj { padding: 29px 0 0 28px; font: bold 15px/20px var(--tahoma); color: #000; }
.btabs { display: flex; height: 24px; background: var(--bar); color: #3c3c3c; }
.btabs > button { padding: 0 9px 0 8px; }
.btabs > .on { background: #fff; color: #1f78c8; }
.info .btabs > button, .additions .btabs > button { padding-right: 10px; }

.query { flex: 1205 1 0; min-width: 0; display: flex; flex-direction: column; }
.additions { flex: 437 1 0; min-width: 0; }
.sqltabs { display: flex; height: 26px; background: var(--bar); border-bottom: 3px solid var(--blue); font: 14px/20px var(--arial); }
.sqltabs button { padding-bottom: 2px; }
.sqltabs > button { padding: 0 30px 2px 9px; }
.sqltabs .on { display: flex; gap: 10px; padding: 0 8px 0 9px; background: var(--blue); color: #fff; }
.sqltabs .close { padding: 2px 0 0; color: #8cc4ee; }
.edbar { display: flex; align-items: center; height: 34px; padding-left: 15px; background: linear-gradient(#fdfdfd, #efefef); }
.egroup { display: flex; gap: 12px; }
.esep { width: 1px; height: 18px; margin: 0 6px 0 11px; background: #c6c6c6; }
.esep.tight { margin: 0 6px; }
.boxed { width: 28px; height: 28px; margin-left: 10px; border: 2px solid #2a86d0; background: #e4eef8; }
.combo { position: relative; height: 26px; background: #fff; }
.combo select { width: 100%; height: 100%; padding: 0 4px; appearance: none; font: 13px/20px var(--arial); }
.combo::after { content: ""; position: absolute; right: 5px; top: 11px; border: 4px solid transparent; border-top: 5px solid #000; border-bottom: 0; pointer-events: none; }
.limit { width: 153px; }
.jump { width: 152px; }
.action { width: 187px; }

.editor { display: flex; background: #efefef; }
.lines { flex: 1; padding-top: 1px; background: #fff; }
.line { display: flex; height: 26px; padding-right: 3px; font: 14px/26px "DejaVu Sans Mono", monospace; }
.num { width: 40px; text-align: right; color: #2b8aa5; }
.mark { width: 48px; padding: 8px 0 0 10px; }
.dot::before { content: ""; display: block; width: 8px; height: 8px; border-radius: 50%; background: #0a84f0; }
.line code { flex: 1; font: inherit; color: #111; white-space: pre; }
.line b { color: #0a86c8; }
.cm { color: #1592d2; }
.line .st { color: #e8891c; }
.line .current { background: #eee; }
.sel { display: inline-block; height: 26px; background: #b1cde5; border-right: 2px solid #222; }
.vscroll { width: 20px; padding: 27px 8px 0 8px; }
.vscroll span { display: block; width: 3px; height: 23px; background: #858585; border-radius: 1px; }
.hscroll { display: flex; background: #efefef; padding-left: 22px; }
.hscroll span { height: 3px; background: #858585; border-radius: 1px; }
.hscroll.ed { height: 28px; padding-top: 9px; }
.hscroll.ed span { width: 42%; }
.hscroll.res { height: 20px; padding-top: 9px; }
.hscroll.res span { width: 85%; }

.result { flex: 1; display: flex; }
.resmain { flex: 1; min-width: 0; display: flex; flex-direction: column; }
.resbar { display: flex; align-items: center; gap: 8px; height: 29px; padding: 0 8px 0 4px; background: #f4f4f7; font-size: 13px; color: #444; white-space: nowrap; }
.resbar strong { font-size: 12px; }
.resbar .rsep + span { margin-left: -2px; }
.rsep { width: 1px; height: 19px; background: #8fa0b8; }
.blue { color: #3d7fd6; margin: 0 1px 0 9px; }
.resbar input { width: 123px; height: 25px; background: #fff; border: 1px solid #e4e4e4; border-bottom-color: #8a8a8a; border-radius: 2px; }
.resbar label { margin-right: -2px; }
.resbar .side { margin-left: auto; }
.gridwrap { flex: 1; background: #fff; overflow: hidden; }
.grid { table-layout: fixed; width: 100%; border-collapse: separate; border-spacing: 0; font-size: 13px; line-height: 20px; color: #111; }
.grid th, .grid td { overflow: hidden; white-space: nowrap; text-align: left; padding: 0 0 0 3px; border-right: 2px solid #fff; font-weight: normal; }
.grid th { height: 27px; padding-left: 8px; border-top: 2px solid var(--line); border-bottom: 2px solid #b4b4b4; border-right: 1px solid #dcdcdc; }
.grid td { height: 21px; border-bottom: 1px solid #fff; }
.grid td:last-child, .grid th:last-child { border-right: 0; }
.grid tbody tr:nth-child(even) td { background: #eaf2fd; }
.grid tbody tr td:first-child, .grid th:first-child { background: #fff; padding: 0; border-left: 1px solid var(--line); border-right: 1px solid var(--line); }
.grid tbody tr td:first-child { border-bottom-color: #dcdcdc; }
.grid tbody tr:nth-child(even) td:first-child { background: #fff; }
.hot { background: #d9eafa; }
.cur::before { content: ""; display: block; width: 7px; height: 12px; margin-left: 8px; background: #333; clip-path: polygon(0 0, 100% 50%, 0 100%); }
.new::before { content: ""; display: block; width: 7px; height: 7px; margin: 4px 0 0 11px; border-radius: 3px; background: #555; }
.grid .nulls td { padding-left: 1px; vertical-align: top; }
.grid .nulls td:first-child { vertical-align: middle; }
.nulls span { display: block; width: 27px; height: 11px; background: #808080; color: #fff; font: 9px/11px var(--tahoma); text-align: center; }
.c0 { width: 32px; } .c1 { width: 79px; } .c2 { width: 111px; } .c3 { width: 251px; } .c4 { width: 112px; }
.c6 { width: 63px; } .c7 { width: 88px; } .c8 { width: 118px; }

.resside { flex: 0 0 72px; display: flex; flex-direction: column; background: var(--bar); font-size: 12px; line-height: 13px; color: #777; }
.resside button { flex-direction: column; justify-content: flex-start; height: 85px; padding-top: 5px; gap: 6px; }
.resside .on { position: relative; background: var(--blue); color: #fff; }
.resside .on::before { content: ""; position: absolute; left: 0; top: 34px; width: 10px; height: 22px; background: #fff; clip-path: polygon(0 0, 100% 50%, 0 100%); }
.updown { display: flex; flex-direction: column; align-items: center; gap: 4px; margin-top: auto; padding-bottom: 5px; }
.u { color: #d6d6d6; }
.d { color: #c2c2c2; }
.restabs > .on { display: flex; gap: 9px; padding: 0 8px 0 9px; }
.restabs > .apply { width: 78px; height: 19px; margin: 3px 9px 0 auto; background: #fafafa; border-radius: 3px; color: #8a8a8a; font-size: 13px; }
.restabs > .cut { width: 7px; height: 19px; margin-top: 3px; padding: 0; background: #fafafa; border-radius: 3px 0 0 3px; }

.addbar { display: flex; align-items: center; height: 34px; gap: 11px; padding-left: 15px; background: #f4f4f7; }
.addbar .fwd { margin: 0 3px 0 12px; }
.addbar .rsep { background: #8fa0b8; width: 2px; }
.addbar .rsep + button { margin-left: -3px; }
.addbar .combo { margin-left: -7px; }
.help { padding: 14px 8px; font: bold 20px/24px var(--tahoma); color: #808080; text-align: center; }

.output { flex: 0 0 249px; }
.outbar { display: flex; align-items: center; gap: 8px; height: 33px; padding: 1px 0 0 9px; background: #f4f4f7; }
.log { table-layout: fixed; width: 100%; border-collapse: separate; border-spacing: 0; font: 13px/20px var(--arial); }
.log th { height: 23px; padding: 2px 0 0 8px; font: 12px/20px var(--tahoma); text-align: left; border-right: 1px solid #dcdcdc; }
.log td { height: 27px; padding: 0 0 0 3px; border-right: 2px solid #fff; border-bottom: 1px solid #fff; white-space: nowrap; }
.log td:nth-child(2) { text-align: right; padding-right: 4px; }
.log td:first-child { padding: 2px 0 0 6px; }
.log td:last-child { border-right: 0; }
.log tbody tr:nth-child(even) td { background: #eaf2fd; }
.o0 { width: 27px; } .o1 { width: 45px; } .o2 { width: 64px; } .o3 { width: 684px; } .o5 { width: 141px; }

.taskbar { display: grid; grid-template-columns: 1fr auto 1fr; align-items: center; height: 60px; background: #232223; color: #fff; font: 15px/20px var(--segoe); }
.tleft { padding-left: 13px; }
.apps { display: flex; align-items: center; padding-left: 10px; }
.search { display: flex; align-items: center; gap: 10px; width: 273px; height: 38px; margin: 0 1px 0 18px; padding: 0 13px; border-radius: 19px; background: #f3f3f3; }
.search input { flex: 1; min-width: 0; font-size: 16px; }
.search input::placeholder { color: #606060; opacity: 1; }
.app { position: relative; width: 50px; height: 50px; margin-left: 5px; border-radius: 4px; }
.active { background: #323132; }
.running::after, .active::after { content: ""; position: absolute; bottom: 1px; left: 21px; width: 8px; height: 4px; border-radius: 2px; background: #999; }
.active::after { left: 15px; width: 20px; background: #4cc2ff; }
.tray { display: flex; align-items: center; justify-content: flex-end; padding-right: 27px; text-align: right; }
.mic { margin-left: 25px; }
.lang { margin: 0 22px 0 25px; text-align: center; }
.chev { margin-top: 2px; }
.status { display: flex; align-items: center; gap: 9px; margin-right: 22px; }
.clock { margin-right: 11px; }
```
